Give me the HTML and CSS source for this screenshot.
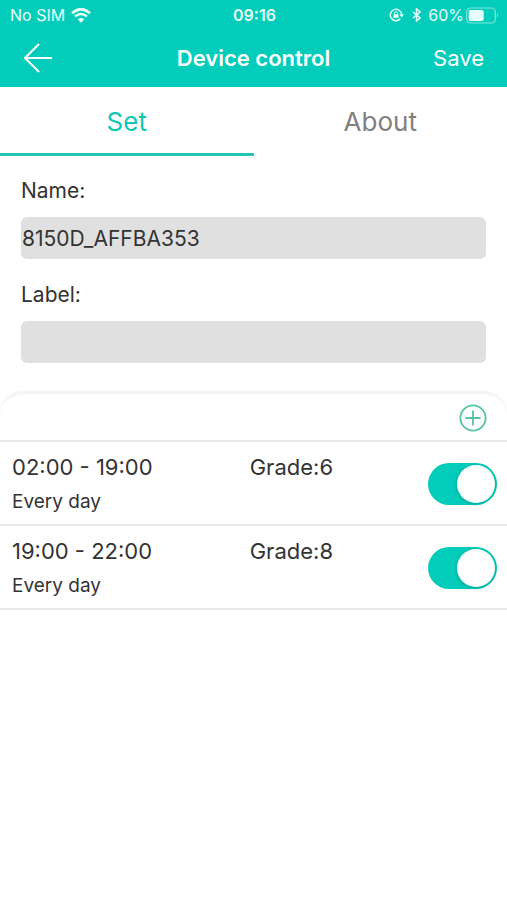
FILE: index.html
```html
<!DOCTYPE html>
<html lang="en">
<head>
<meta charset="utf-8">
<meta name="viewport" content="width=device-width, initial-scale=1">
<title>Device control</title>
<link rel="stylesheet" href="styles.css">
</head>
<body>
<header class="header">
  <div class="status">
    <div class="status-left">
      <span>No SIM</span>
      <svg class="wifi" width="20" height="15" viewBox="0 0 20 15" aria-hidden="true">
        <path d="M1 5.2Q10-2.8 19 5.2" fill="none" stroke="currentColor" stroke-width="2.8"/>
        <path d="M4 8.6Q10 3.4 16 8.6" fill="none" stroke="currentColor" stroke-width="2.6"/>
        <path d="M6.700 11.400Q10 8.600 13.300 11.400L10 14.800Z" fill="currentColor"/>
      </svg>
    </div>
    <span class="clock">09:16</span>
    <div class="status-right">
      <svg class="lock" width="16" height="14" viewBox="0 0 16 14" aria-hidden="true">
        <path d="M11.300 10.800A5.700 5.700 0 1 1 12.700 6.500" fill="none" stroke="currentColor" stroke-width="1.4"/>
        <path d="M10.400 6.300H15L12.700 9.400Z" fill="currentColor"/>
        <rect x="4.500" y="6.300" width="5" height="3.800" rx=".5" fill="currentColor"/>
        <path d="M5.500 6.500V5.300a1.500 1.500 0 0 1 3 0V6.500" fill="none" stroke="currentColor"/>
      </svg>
      <svg class="bluetooth" width="9" height="14" viewBox="0 0 9 14" aria-hidden="true">
        <path d="M1 4L8 10L4.500 13V1L8 4L1 10" fill="none" stroke="currentColor" stroke-width="1.500"/>
      </svg>
      <span>60%</span>
      <svg class="battery" width="33" height="17" viewBox="0 0 33 17" aria-hidden="true">
        <rect x=".7" y="1" width="28.600" height="15" rx="4" fill="none" stroke="currentColor" stroke-width="1.200" opacity=".55"/>
        <rect x="2.700" y="3" width="15" height="11" rx="2" fill="currentColor"/>
        <path d="M31 6.200Q33 8.500 31 10.800Z" fill="currentColor" opacity=".6"/>
      </svg>
    </div>
  </div>
  <div class="navbar">
    <button class="back" type="button" aria-label="Back">
      <svg width="30" height="30" viewBox="0 0 30 30" aria-hidden="true">
        <path d="M16 1L2 15L16 29M2 15H29" fill="none" stroke="currentColor" stroke-width="2"/>
      </svg>
    </button>
    <h1 class="title">Device control</h1>
    <button class="save" type="button">Save</button>
  </div>
</header>
<nav class="tabs">
  <a class="tab tab-active" href="#set" aria-current="page">Set</a>
  <a class="tab" href="#about">About</a>
</nav>
<main id="set">
  <form class="form">
    <label class="label" for="name">Name:</label>
    <input class="field" id="name" type="text" value="8150D_AFFBA353">
    <label class="label" for="label">Label:</label>
    <input class="field" id="label" type="text">
  </form>
  <section class="panel">
    <div class="toolbar">
      <button class="add" type="button" aria-label="Add schedule">
        <svg width="28" height="28" viewBox="0 0 28 28" aria-hidden="true">
          <path d="M14 6.500V21.500M6.500 14H21.500" fill="none" stroke="currentColor" stroke-width="1.800"/>
          <circle cx="14" cy="14" r="12.600" fill="none" stroke="currentColor" stroke-width="1.800"/>
        </svg>
      </button>
    </div>
    <ul class="list">
      <li class="row">
        <div class="when">
          <span class="time">02:00 - 19:00</span>
          <span class="repeat">Every day</span>
        </div>
        <span class="grade">Grade:6</span>
        <input class="switch" type="checkbox" role="switch" aria-label="02:00 - 19:00" checked>
      </li>
      <li class="row">
        <div class="when">
          <span class="time">19:00 - 22:00</span>
          <span class="repeat">Every day</span>
        </div>
        <span class="grade">Grade:8</span>
        <input class="switch" type="checkbox" role="switch" aria-label="19:00 - 22:00" checked>
      </li>
    </ul>
  </section>
</main>
</body>
</html>
```
FILE: styles.css
```css
* {
  box-sizing: border-box;
}

body {
  margin: 0;
  background: #fff;
  color: #333;
  font-family: Inter, "Liberation Sans", sans-serif;
}

button {
  padding: 0;
  border: 0;
  background: none;
  color: inherit;
  font: inherit;
}

svg {
  display: block;
}

.header {
  background: #03ccba;
  color: #fff;
}

.status {
  display: grid;
  grid-template-columns: 1fr auto 1fr;
  align-items: center;
  height: 30px;
  padding: 0 8px 0 10px;
  font-size: 16px;
  color: #e6fffb;
}

.status-left,
.status-right {
  display: flex;
  align-items: center;
  gap: 7px;
}

.status-left {
  gap: 6px;
}

.status-right {
  justify-content: flex-end;
}

.battery {
  margin-left: -5px;
}

.clock {
  font-weight: 600;
}

.navbar {
  display: grid;
  grid-template-columns: 1fr auto 1fr;
  align-items: center;
  height: 57px;
  padding: 0 23px 2px;
}

.back {
  justify-self: start;
}

.title {
  margin: 0;
  font-size: 22px;
  font-weight: 600;
}

.save {
  justify-self: end;
  font-size: 22px;
}

.tabs {
  display: grid;
  grid-template-columns: 1fr 1fr;
}

.tab {
  height: 69px;
  border-bottom: 3px solid transparent;
  color: #808080;
  font-size: 26px;
  line-height: 70px;
  text-align: center;
  text-decoration: none;
}

.tab-active {
  border-color: #1fc4b3;
  color: #12c6b5;
}

.form {
  display: flex;
  flex-direction: column;
  padding: 9px 21px 29px;
}

.label {
  padding: 12px 0;
  font-size: 21px;
  line-height: 28px;
}

.field {
  width: 100%;
  height: 42px;
  margin-bottom: 10px;
  padding: 0 1px;
  border: 0;
  border-radius: 6px;
  background: #e0e0e0;
  color: #333;
  font: inherit;
  font-size: 21px;
}

.field:last-child {
  margin-bottom: 0;
}

.panel {
  border-top: 2px solid #f4f4f4;
  border-radius: 24px 24px 0 0;
  box-shadow: 0 -1px 3px #f0f0f0;
}

.toolbar {
  display: flex;
  align-items: center;
  justify-content: flex-end;
  height: 48px;
  padding: 2px 20px 0;
  border-bottom: 2px solid #e8e8e8;
}

.add {
  color: #55c3a5;
}

.list {
  margin: 0;
  padding: 0;
  list-style: none;
}

.row {
  display: grid;
  grid-template-columns: 4fr 3fr auto;
  align-items: center;
  padding: 7px 10px 5px 12px;
  border-bottom: 2px solid #e8e8e8;
}

.when {
  display: flex;
  flex-direction: column;
}

.time,
.grade {
  font-size: 22px;
  line-height: 36px;
}

.repeat {
  font-size: 19px;
  line-height: 34px;
}

.grade {
  align-self: start;
}

.switch {
  appearance: none;
  display: flex;
  align-items: center;
  width: 69px;
  height: 42px;
  margin: 0;
  padding: 2px;
  border-radius: 21px;
  background: #ccc;
}

.switch::before {
  content: "";
  width: 38px;
  height: 38px;
  border-radius: 50%;
  background: #fff;
  box-shadow: 0 1px 4px #0003;
}

.switch:checked {
  justify-content: flex-end;
  background: #03ccba;
}
```
